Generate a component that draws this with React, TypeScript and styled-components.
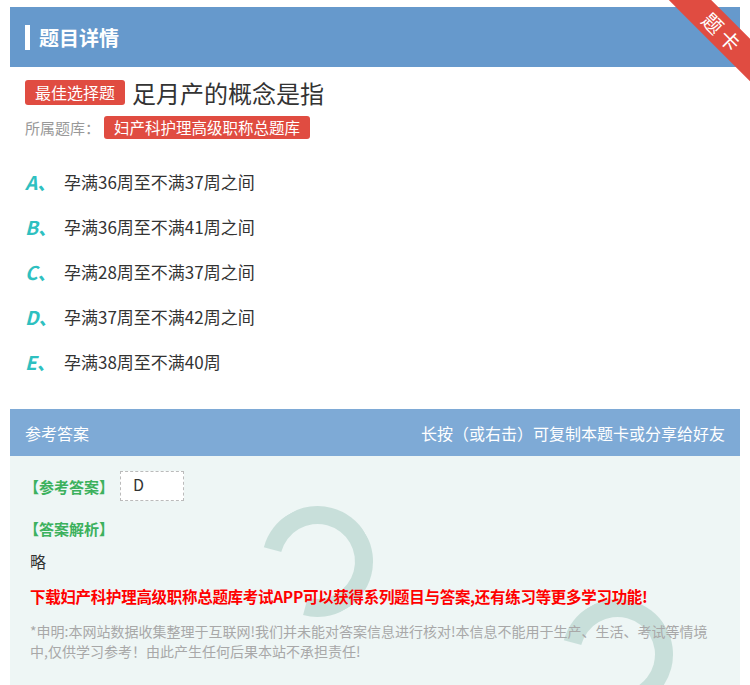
import styled, { createGlobalStyle } from 'styled-components';

const Global = createGlobalStyle`
  body { margin: 0; background: #fff; font-family: "Noto Sans CJK SC", "Noto Sans", sans-serif; }
`;

const options = [
  ['A', '孕满36周至不满37周之间'],
  ['B', '孕满36周至不满41周之间'],
  ['C', '孕满28周至不满37周之间'],
  ['D', '孕满37周至不满42周之间'],
  ['E', '孕满38周至不满40周'],
];

const App = () => (
  <>
    <Global />
    <Page>
      <Header>
        <Bar />
        题目详情
      </Header>
      <Ribbon>
        <RibbonBand>题卡</RibbonBand>
      </Ribbon>
      <TitleRow>
        <Tag>最佳选择题</Tag>
        <Title>足月产的概念是指</Title>
      </TitleRow>
      <BankRow>
        所属题库：<Tag $small>妇产科护理高级职称总题库</Tag>
      </BankRow>
      <Options>
        {options.map(([k, t]) => (
          <Option key={k}>
            <Letter>{k}、</Letter>
            {t}
          </Option>
        ))}
      </Options>
      <AnswerBox>
        <AnswerHead>
          <span>参考答案</span>
          <span>长按（或右击）可复制本题卡或分享给好友</span>
        </AnswerHead>
        <AnswerBody>
          <Swirl style={{ left: 252, top: 50 }} />
          <Swirl style={{ left: 552, top: 143 }} />
          <Label>
            【参考答案】<AnswerImg>D</AnswerImg>
          </Label>
          <Label>【答案解析】</Label>
          <Plain>略</Plain>
          <Promo>下载妇产科护理高级职称总题库考试APP可以获得系列题目与答案,还有练习等更多学习功能!</Promo>
          <Note>*申明:本网站数据收集整理于互联网!我们并未能对答案信息进行核对!本信息不能用于生产、生活、考试等情境中,仅供学习参考！由此产生任何后果本站不承担责任!</Note>
        </AnswerBody>
      </AnswerBox>
    </Page>
  </>
);

export default App;

const Page = styled.div`
  position: relative;
  width: 750px;
  height: 685px;
  overflow: hidden;
  padding-top: 7px;
  box-sizing: border-box;
`;

const Header = styled.div`
  margin: 0 10px;
  height: 60px;
  background: #6699cc;
  color: #fff;
  font-size: 20px;
  font-weight: bold;
  display: flex;
  align-items: center;
  padding-left: 15px;
  gap: 9px;
`;

const Bar = styled.div`
  width: 5px;
  height: 25px;
  background: #fff;
`;

const Ribbon = styled.div`
  position: absolute;
  right: 0;
  top: 0;
  width: 90px;
  height: 90px;
  overflow: hidden;
`;

const RibbonBand = styled.div`
  position: absolute;
  width: 130px;
  height: 30px;
  top: 18px;
  right: -38px;
  transform: rotate(45deg);
  background: #e04c41;
  color: #fff;
  font-size: 20px;
  text-align: center;
  line-height: 30px;
  letter-spacing: 4px;
`;

const TitleRow = styled.div`
  display: flex;
  align-items: center;
  gap: 7px;
  margin: 8px 0 0 25px;
`;

const Tag = styled.span<{ $small?: boolean }>`
  background: #e04c41;
  color: #fff;
  font-size: ${(p) => (p.$small ? 15.5 : 16)}px;
  padding: 0 10px;
  border-radius: 3px;
  line-height: ${(p) => (p.$small ? 23 : 25)}px;
`;

const Title = styled.span`
  font-size: 24px;
  color: #333;
`;

const BankRow = styled.div`
  display: flex;
  align-items: center;
  margin: 6px 0 0 25px;
  color: #999;
  font-size: 15px;
  gap: 4px;
`;

const Options = styled.div`
  margin: 20px 0 0 25px;
`;

const Option = styled.div`
  height: 45px;
  display: flex;
  align-items: center;
  font-size: 17px;
  color: #333;
`;

const Letter = styled.span`
  color: #2ec0c0;
  font-size: 19px;
  font-style: italic;
  font-weight: bold;
  width: 39px;
`;

const AnswerBox = styled.div`
  margin: 25px 10px 0;
`;

const AnswerHead = styled.div`
  height: 47px;
  background: #7eaad6;
  color: #fff;
  font-size: 16px;
  display: flex;
  align-items: center;
  justify-content: space-between;
  padding: 0 15px;
`;

const AnswerBody = styled.div`
  position: relative;
  background: #eef6f5;
  height: 240px;
  padding: 15px 20px 0;
  overflow: hidden;
`;

const Swirl = styled.div`
  position: absolute;
  width: 75px;
  height: 75px;
  border-radius: 50%;
  border: 18px solid #b8d6cf;
  border-left-color: transparent;
  opacity: 0.7;
  transform: rotate(-30deg);
`;

const Label = styled.div`
  position: relative;
  color: #3cb15d;
  font-size: 15px;
  font-weight: bold;
  display: flex;
  align-items: center;
  height: 30px;
  margin-bottom: 12px;
  margin-left: -6px;
`;

const AnswerImg = styled.span`
  width: 64px;
  height: 30px;
  margin-left: 6px;
  background: #fff;
  border: 1px dashed #bbb;
  color: #333;
  font-weight: normal;
  font-size: 16px;
  padding-left: 12px;
  box-sizing: border-box;
`;

const Plain = styled.div`
  position: relative;
  font-size: 16px;
  color: #333;
  margin-top: -6px;
`;

const Promo = styled.div`
  position: relative;
  color: #ff0000;
  font-weight: bold;
  font-size: 15.5px;
  margin-top: 12px;
  white-space: nowrap;
  letter-spacing: -0.3px;
`;

const Note = styled.div`
  position: relative;
  color: #a8a8a8;
  font-size: 14px;
  line-height: 20px;
  margin-top: 14px;
`;
